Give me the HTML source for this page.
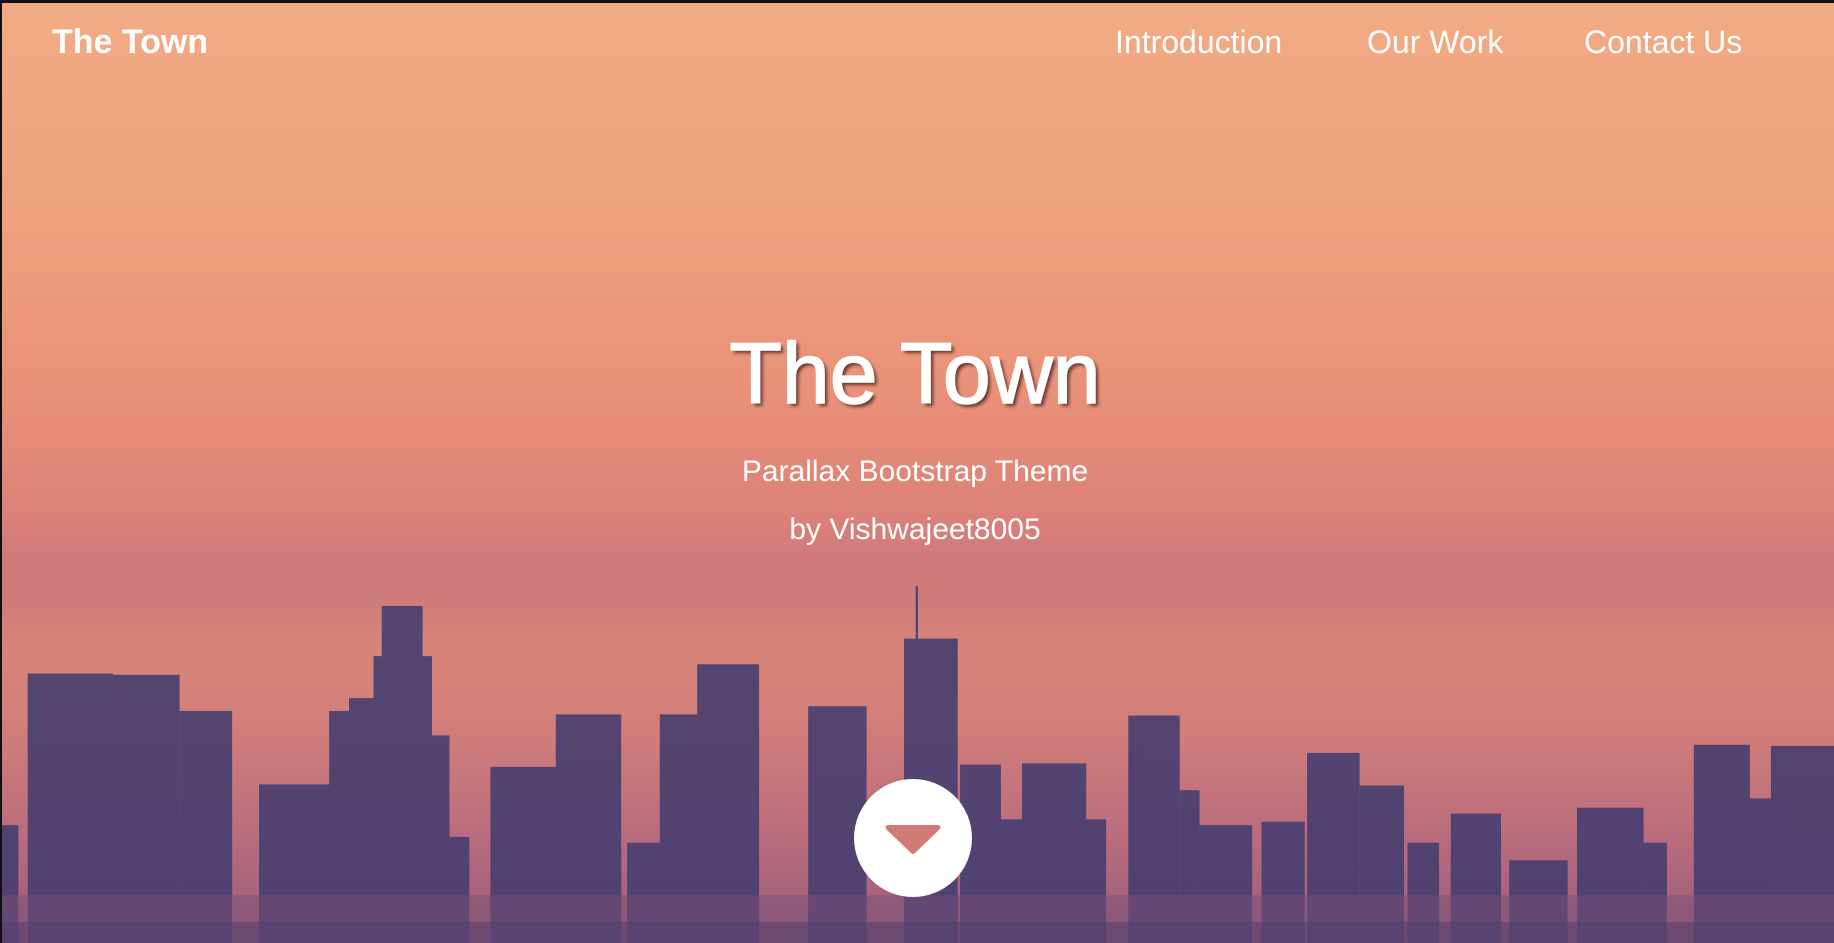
<!DOCTYPE html>
<html><head><meta charset="utf-8"><style>
html,body{margin:0;padding:0;width:1834px;height:943px;overflow:hidden;background:#111;}
.hero{position:absolute;left:2px;top:3px;width:1832px;height:940px;overflow:hidden;
background:linear-gradient(to bottom,#f2ab84 0%,#efa27f 20%,#ea9479 38%,#e48a77 47%,#dc8279 54%,#d07a7a 59%,#cf7b7a 63%,#d7857a 69%,#d27e7a 77%,#bd6f7c 87%,#9a5c7b 100%);
font-family:"Liberation Sans",sans-serif;color:#fff;}
svg.sky{position:absolute;left:0;top:0;width:1832px;height:940px;}
.logo{position:absolute;left:50px;top:20px;font-size:34px;font-weight:bold;}
.nav{position:absolute;top:21px;font-size:32px;}
h1{position:absolute;left:0;width:1826px;top:322px;margin:0;text-align:center;font-size:86px;font-weight:normal;text-shadow:3px 3px 3px rgba(60,30,30,.75);-webkit-text-stroke:1.5px #fff;}
.sub{position:absolute;left:0;width:1826px;text-align:center;font-size:30px;}
.btn{position:absolute;left:852px;top:776px;width:118px;height:118px;border-radius:50%;background:#fff;}
</style></head><body>
<div class="hero">
<svg class="sky" viewBox="0 0 1568 806" preserveAspectRatio="none">
<g fill="#473e70" opacity="0.9">
<rect x="22" y="575" width="73" height="231"/><rect x="95" y="576" width="57" height="230"/><rect x="152" y="607" width="45" height="199"/>
<rect x="220" y="670" width="70" height="136"/><rect x="230" y="698" width="80" height="108"/>
<rect x="280" y="607" width="20" height="199"/><rect x="297" y="596" width="21" height="210"/>
<rect x="325" y="517" width="35" height="289"/><rect x="318" y="560" width="50" height="246"/><rect x="333" y="628" width="50" height="178"/><rect x="310" y="715" width="90" height="91"/>
<rect x="418" y="655" width="64" height="151"/><rect x="474" y="610" width="56" height="196"/>
<rect x="563" y="610" width="37" height="196"/><rect x="595" y="567" width="53" height="239"/><rect x="535" y="720" width="40" height="86"/>
<rect x="690" y="603" width="50" height="203"/>
<rect x="772" y="545" width="46" height="261"/><rect x="782" y="500" width="2" height="50"/>
<rect x="820" y="653" width="35" height="153"/><rect x="873" y="652" width="55" height="154"/><rect x="850" y="700" width="95" height="106"/>
<rect x="964" y="611" width="44" height="195"/><rect x="1008" y="675" width="17" height="131"/><rect x="1025" y="705" width="45" height="101"/>
<rect x="1078" y="702" width="37" height="104"/><rect x="1117" y="643" width="45" height="163"/><rect x="1162" y="671" width="38" height="135"/>
<rect x="1203" y="720" width="27" height="86"/><rect x="1240" y="695" width="43" height="111"/><rect x="1290" y="735" width="50" height="71"/>
<rect x="1348" y="690" width="57" height="116"/><rect x="1405" y="720" width="20" height="86"/>
<rect x="1448" y="636" width="48" height="170"/><rect x="1494" y="682" width="20" height="124"/><rect x="1514" y="637" width="54" height="169"/>
<rect x="0" y="705" width="14" height="101"/>
</g>
<rect x="0" y="765" width="1568" height="41" fill="#7a5078" opacity="0.5"/>
<rect x="0" y="788" width="1568" height="18" fill="#4e3d6c" opacity="0.5"/>
</svg>
<div class="logo">The Town</div>
<div class="nav" style="left:1113px">Introduction</div>
<div class="nav" style="left:1365px">Our Work</div>
<div class="nav" style="left:1582px">Contact Us</div>
<h1>The Town</h1>
<div class="sub" style="top:452px">Parallax Bootstrap Theme</div>
<div class="sub" style="top:510px">by Vishwajeet8005</div>
<div class="btn"><svg width="118" height="118" viewBox="0 0 118 118"><path d="M32 50 Q30 46 35 46 L83 46 Q88 46 86 50 L61 74 Q59 76 57 74 Z" fill="#d07b74"/></svg></div>
</div>
</body></html>
